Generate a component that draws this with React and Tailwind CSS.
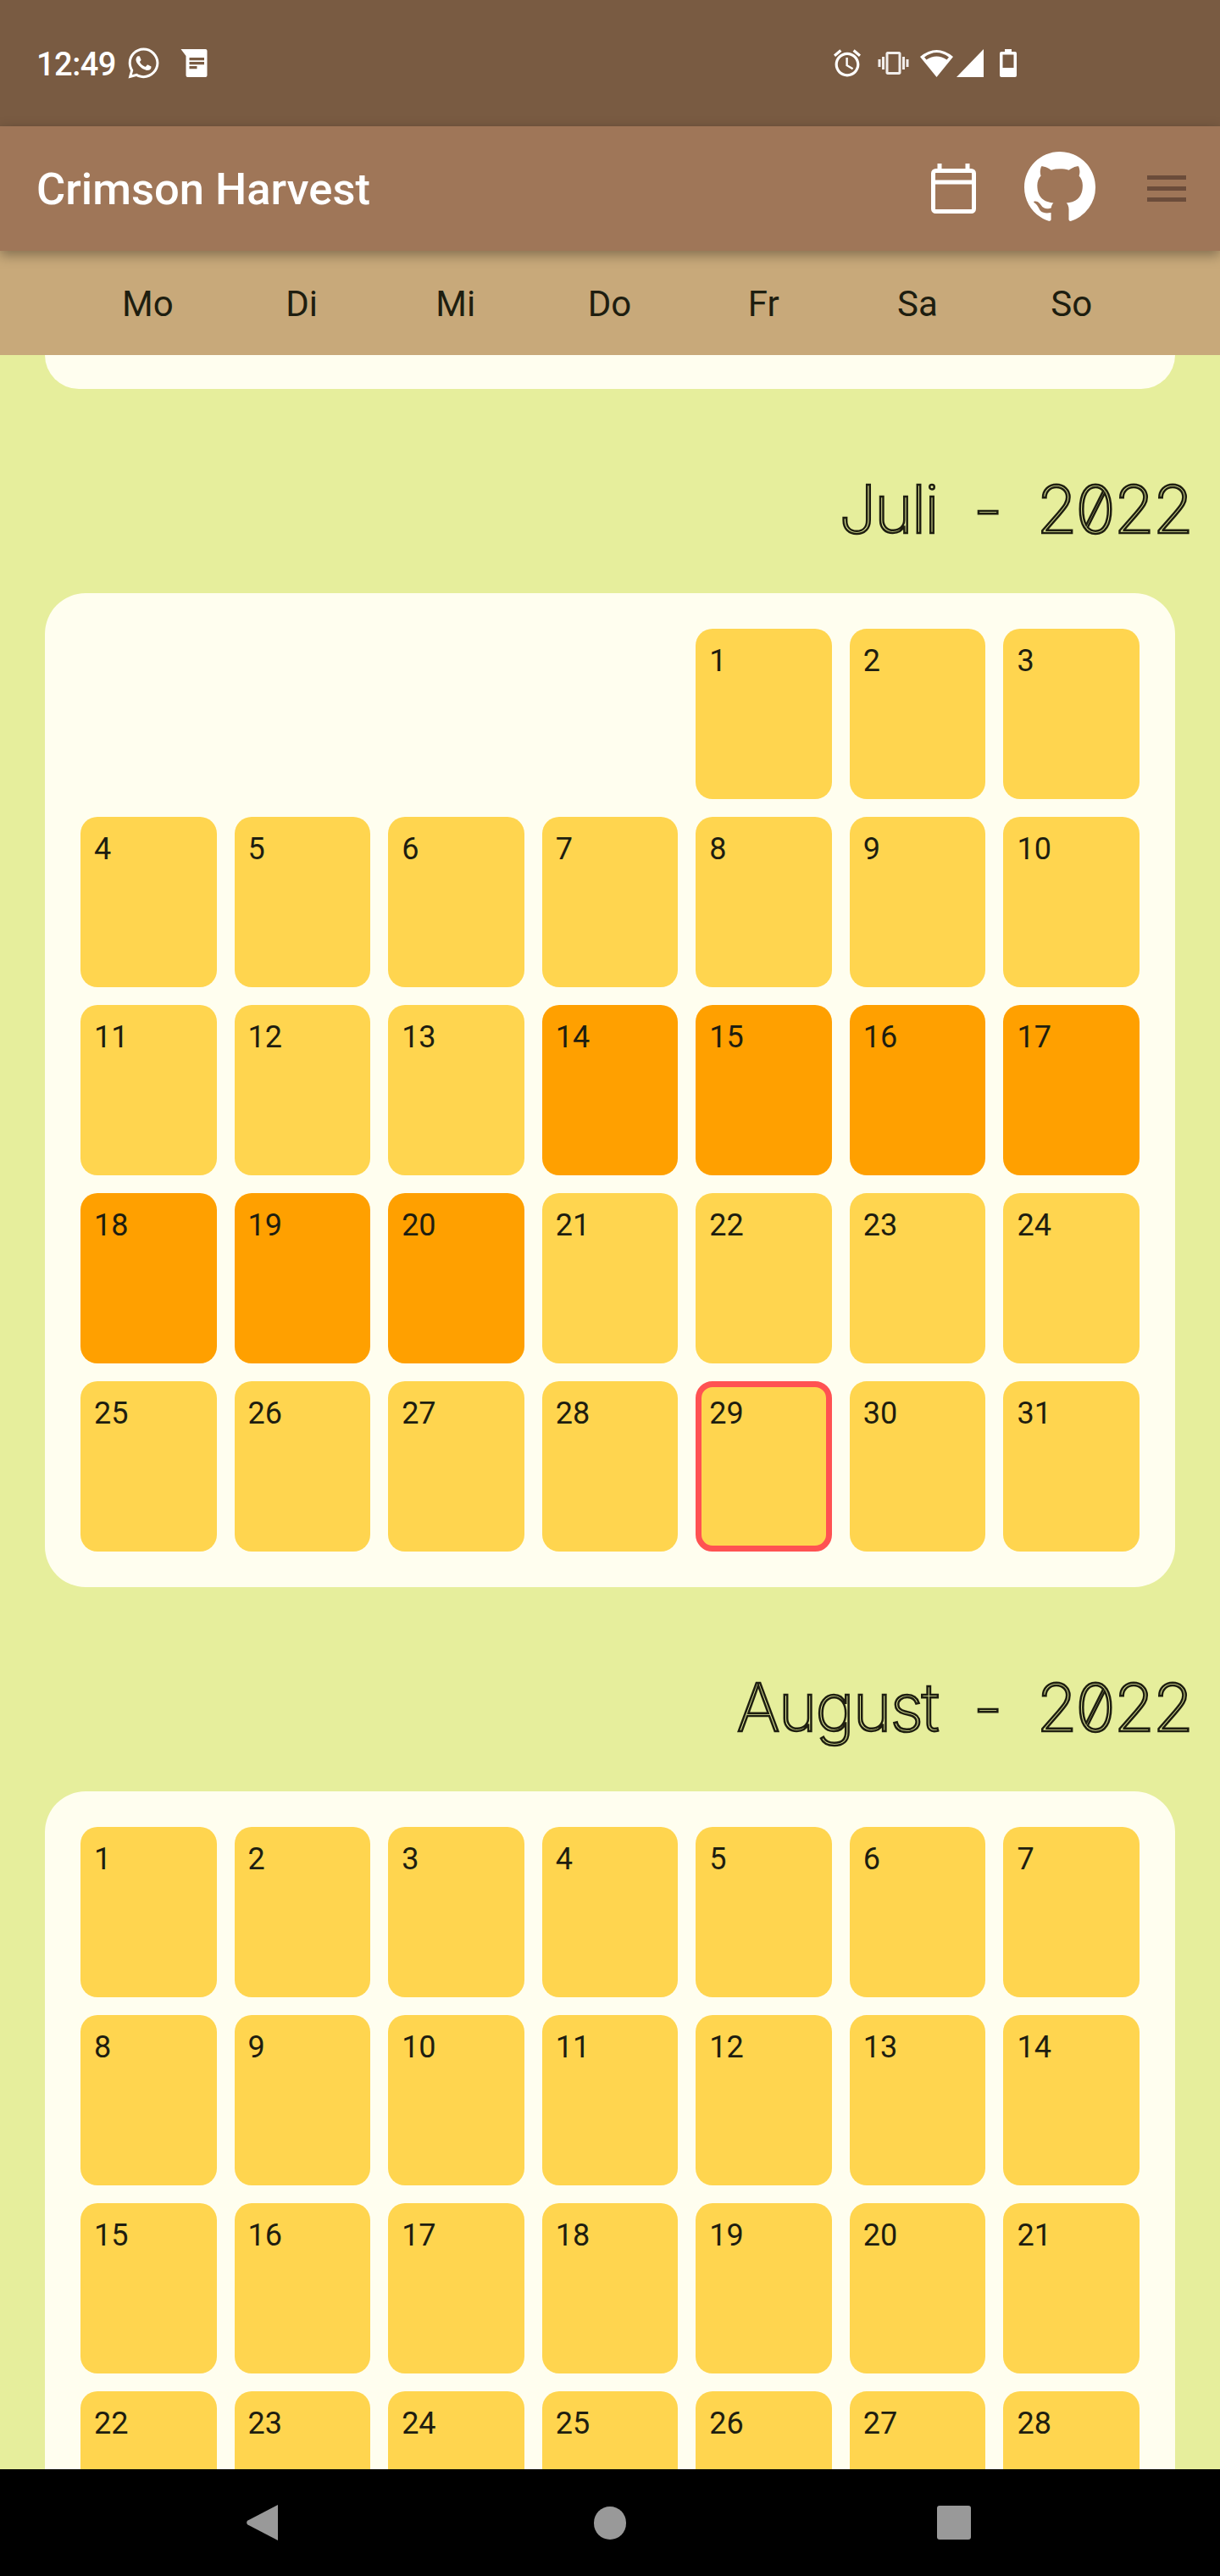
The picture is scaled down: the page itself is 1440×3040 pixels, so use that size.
import { FaWhatsapp } from "react-icons/fa";

const weekdays = ["Mo", "Di", "Mi", "Do", "Fr", "Sa", "So"];

function range(from, to) {
  const days = [];
  for (let d = from; d <= to; d++) days.push(d);
  return days;
}

function DayCell({ day, marked, today }) {
  if (today) {
    return (
      <div className="h-[201px] rounded-[20px] border-[7px] border-[#ff5252] bg-[#ffd54f] px-[9px] pt-[10px] text-[36px] leading-[42px]">
        {day}
      </div>
    );
  }
  return (
    <div
      className={
        marked
          ? "h-[201px] rounded-[20px] bg-[#ffa000] px-[16px] pt-[17px] text-[36px] leading-[42px]"
          : "h-[201px] rounded-[20px] bg-[#ffd54f] px-[16px] pt-[17px] text-[36px] leading-[42px]"
      }
    >
      {day}
    </div>
  );
}

function Month({ title, blanks, days, marked = [], today }) {
  return (
    <section>
      <h2 className="h-[241px] pr-[33px] pt-[102px] text-right font-[Inter,sans-serif] text-[78px] leading-[80px] font-extralight tracking-[-2px] [word-spacing:22px] text-transparent slashed-zero [-webkit-text-stroke:2.5px_#1e1e10]">
        {title}
      </h2>
      <div className="mx-[53px] grid grid-cols-7 gap-x-[21px] gap-y-[21px] rounded-[48px] bg-[#fffeef] p-[42px]">
        {range(1, blanks).map((b) => (
          <div key={"blank" + b} />
        ))}
        {days.map((d) => (
          <DayCell key={d} day={d} marked={marked.includes(d)} today={d === today} />
        ))}
      </div>
    </section>
  );
}

function StatusBar() {
  return (
    <div className="flex h-[149px] items-center bg-[#795b42] pl-[43px] pr-[240px] text-white">
      <span className="w-[93px] pt-[2px] text-[38px] leading-none font-medium tracking-[-0.5px]">12:49</span>
      <FaWhatsapp className="ml-[13px] h-[41px] w-[41px]" />
      {/* notes notification */}
      <svg viewBox="0 0 31 33" className="ml-[23px] h-[33px] w-[32px]" fill="currentColor">
        <path d="M0 0H29a2 2 0 0 1 2 2V31a2 2 0 0 1-2 2H8a2 2 0 0 1-2-2V8Z" />
        <path fill="#795b42" d="M10 10h17.5v3.3H10zM10 15h17.5v3.3H10zM10 20h9v3.3h-9z" />
      </svg>
      <div className="ml-auto flex items-center">
        <svg viewBox="2 1.8 20 20.4" className="h-[33px] w-[32px]" fill="currentColor">
          <path d="M22 5.72l-4.6-3.86-1.29 1.53 4.6 3.86L22 5.72zM7.88 3.39L6.6 1.86 2 5.71l1.29 1.53 4.59-3.85zM12.5 8H11v6l4.75 2.85.75-1.23-4-2.37V8zM12 4c-4.97 0-9 4.03-9 9s4.03 9 9 9 9-4.03 9-9-4.03-9-9-9zm0 16c-3.87 0-7-3.13-7-7s3.13-7 7-7 7 3.13 7 7-3.13 7-7 7z" />
        </svg>
        <svg viewBox="0 3 24 18" className="ml-[20px] h-[27px] w-[37px]" fill="currentColor" opacity="0.9">
          <path d="M0 15h2V9H0v6zm3 2h2V7H3v10zm19-8v6h2V9h-2zm-3 8h2V7h-2v10zM16.5 3h-9C6.67 3 6 3.67 6 4.5v15c0 .83.67 1.5 1.5 1.5h9c.83 0 1.5-.67 1.5-1.5v-15c0-.83-.67-1.5-1.5-1.5zM16 19H8V5h8v14z" />
        </svg>
        <svg viewBox="0 0 39 33" className="ml-[13px] h-[33px] w-[39px]" fill="currentColor">
          <path fillRule="evenodd" d="M19.5 33L0 9Q19.5-7 39 9ZM5 9.5L7.5 12.5Q19.5 4.5 31.5 12.5L34 9.5Q19.5-1.5 5 9.5Z" />
        </svg>
        <svg viewBox="0 0 32 33" className="ml-[4px] h-[33px] w-[32px]" fill="currentColor">
          <path d="M0 33L32 0V33Z" />
        </svg>
        <svg viewBox="0 0 20 33" className="ml-[19px] h-[33px] w-[20px]" fill="currentColor">
          <path fillRule="evenodd" d="M6 0h8v3h4a2 2 0 0 1 2 2v26a2 2 0 0 1-2 2H2a2 2 0 0 1-2-2V5a2 2 0 0 1 2-2h4ZM3.5 6.5V22h13V6.5Z" />
        </svg>
      </div>
    </div>
  );
}

function AppBar() {
  return (
    <div className="relative z-10 flex h-[147px] items-center bg-[#9f7658] pl-[43px] pr-[40px] shadow-[0_5px_14px_rgba(0,0,0,0.35)]">
      <h1 className="pt-[2px] text-[52.5px] leading-none font-medium text-white">Crimson Harvest</h1>
      <svg viewBox="0 0 53 59" className="ml-auto h-[59px] w-[53px]" fill="none" stroke="white" strokeWidth="5">
        <rect x="2.5" y="8.5" width="48" height="48" rx="3" />
        <path d="M2.5 22h48M10 0v8M43 0v8" />
      </svg>
      <svg viewBox="0 0 16 16" className="ml-[57px] h-[84px] w-[84px] mb-[3px]" fill="white">
        <path d="M8 0C3.58 0 0 3.58 0 8c0 3.54 2.29 6.53 5.47 7.59.4.07.55-.17.55-.38 0-.19-.01-.82-.01-1.49-2.01.37-2.53-.49-2.69-.94-.09-.23-.48-.94-.82-1.13-.28-.15-.68-.52-.01-.53.63-.01 1.08.58 1.23.82.72 1.21 1.87.87 2.33.66.07-.52.28-.87.51-1.07-1.78-.2-3.64-.89-3.64-3.95 0-.87.31-1.59.82-2.15-.08-.2-.36-1.02.08-2.12 0 0 .67-.21 2.2.82.64-.18 1.32-.27 2-.27.68 0 1.36.09 2 .27 1.53-1.04 2.2-.82 2.2-.82.44 1.1.16 1.92.08 2.12.51.56.82 1.27.82 2.15 0 3.07-1.87 3.75-3.65 3.95.29.25.54.73.54 1.48 0 1.07-.01 1.93-.01 2.2 0 .21.15.46.55.38A8.013 8.013 0 0016 8c0-4.42-3.58-8-8-8z" />
      </svg>
      <div className="ml-[61px] flex w-[46px] flex-col gap-[8px]">
        <div className="h-[5px] bg-[#6b4c3a]" />
        <div className="h-[5px] bg-[#6b4c3a]" />
        <div className="h-[5px] bg-[#6b4c3a]" />
      </div>
    </div>
  );
}

export default function App() {
  return (
    <div className="flex h-[3040px] flex-col overflow-hidden bg-[#e6ee9c] font-[Roboto,sans-serif] text-[#1e1e10]">
      <StatusBar />
      <AppBar />
      <div className="grid h-[123px] grid-cols-7 items-center gap-x-[21px] bg-[#c8a97a] pl-[94px] pr-[95px] pt-[2px] text-center text-[42px] leading-none">
        {weekdays.map((w) => (
          <span key={w}>{w}</span>
        ))}
      </div>

      <div className="flex-1 overflow-hidden">
        {/* end of the june card, scrolled away */}
        <div className="mx-[53px] h-[40px] rounded-b-[48px] bg-[#fffeef]" />
        <Month title="Juli - 2022" blanks={4} days={range(1, 31)} marked={range(14, 20)} today={29} />
        <Month title="August - 2022" blanks={0} days={range(1, 28)} />
      </div>

      <div className="flex h-[126px] items-center bg-black pl-[291px]">
        <svg viewBox="0 0 37 42" className="h-[42px] w-[37px]" fill="#999999">
          <path d="M37 0V42L1.5 23.5a3 3 0 0 1 0-5Z" />
        </svg>
        <div className="ml-[373px] h-[39px] w-[38px] rounded-full bg-[#999999]" />
        <div className="ml-[367px] h-[40px] w-[40px] rounded-[3px] bg-[#999999]" />
      </div>
    </div>
  );
}
